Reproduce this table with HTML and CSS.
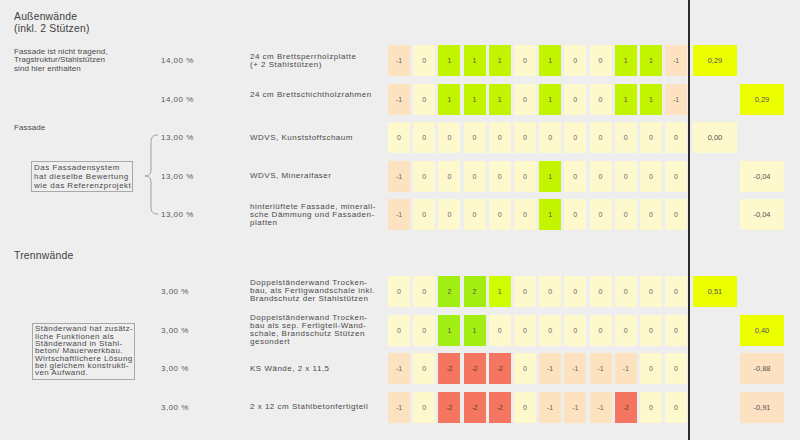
FILE: index.html
```html
<!DOCTYPE html>
<html lang="de">
<head>
<meta charset="utf-8">
<link rel="stylesheet" href="styles.css">
</head>
<body>
<div class="page">
  <div class="vline"></div>

  <section class="sec sec1">
    <h2 class="head">Außenwände<br>(inkl. 2 Stützen)</h2>
    <div class="grid">
      <!-- row 1 -->
      <div class="note r1">Fassade ist nicht tragend,<br>Tragstruktur/Stahlstützen<br>sind hier enthalten</div>
      <div class="pct r1">14,00 %</div>
      <div class="desc r1">24 cm Brettsperrholzplatte<br>(+ 2 Stahlstützen)</div>
      <div class="cells r1">
        <span class="c m1">-1</span><span class="c z">0</span><span class="c p1">1</span><span class="c p1">1</span><span class="c p1">1</span><span class="c z">0</span><span class="c p1">1</span><span class="c z">0</span><span class="c z">0</span><span class="c p1">1</span><span class="c p1">1</span><span class="c m1">-1</span>
      </div>
      <div class="res res1 r1 ry">0,29</div>

      <!-- row 2 -->
      <div class="pct r2">14,00 %</div>
      <div class="desc r2 up">24 cm Brettschichtholzrahmen</div>
      <div class="cells r2">
        <span class="c m1">-1</span><span class="c z">0</span><span class="c p1">1</span><span class="c p1">1</span><span class="c p1">1</span><span class="c z">0</span><span class="c p1">1</span><span class="c z">0</span><span class="c z">0</span><span class="c p1">1</span><span class="c p1">1</span><span class="c m1">-1</span>
      </div>
      <div class="res res2 r2 ry">0,29</div>

      <!-- group rows 3-5 -->
      <div class="group r3to5">
        <div class="glabel">Fassade</div>
        <div class="box box1">Das Fassadensystem<br>hat dieselbe Bewertung<br>wie das Referenzprojekt</div>
      </div>
      <svg class="brace r3to5" width="18" height="108" viewBox="0 0 18 108">
        <path d="M15 13 C10 13 8 15 8 21 L8 47 C8 52 6 54 2 54 C6 54 8 56 8 61 L8 85 C8 90 10 92 15 92" fill="none" stroke="#8a8a8a" stroke-width="0.8"/>
      </svg>

      <!-- row 3 -->
      <div class="pct r3">13,00 %</div>
      <div class="desc r3">WDVS, Kunststoffschaum</div>
      <div class="cells r3">
        <span class="c z">0</span><span class="c z">0</span><span class="c z">0</span><span class="c z">0</span><span class="c z">0</span><span class="c z">0</span><span class="c z">0</span><span class="c z">0</span><span class="c z">0</span><span class="c z">0</span><span class="c z">0</span><span class="c z">0</span>
      </div>
      <div class="res res1 r3 rz">0,00</div>

      <!-- row 4 -->
      <div class="pct r4">13,00 %</div>
      <div class="desc r4">WDVS, Mineralfaser</div>
      <div class="cells r4">
        <span class="c m1">-1</span><span class="c z">0</span><span class="c z">0</span><span class="c z">0</span><span class="c z">0</span><span class="c z">0</span><span class="c p1">1</span><span class="c z">0</span><span class="c z">0</span><span class="c z">0</span><span class="c z">0</span><span class="c z">0</span>
      </div>
      <div class="res res2 r4 rz">-0,04</div>

      <!-- row 5 -->
      <div class="pct r5">13,00 %</div>
      <div class="desc r5">hinterlüftete Fassade, minerali-<br>sche Dämmung und Fassaden-<br>platten</div>
      <div class="cells r5">
        <span class="c m1">-1</span><span class="c z">0</span><span class="c z">0</span><span class="c z">0</span><span class="c z">0</span><span class="c z">0</span><span class="c p1">1</span><span class="c z">0</span><span class="c z">0</span><span class="c z">0</span><span class="c z">0</span><span class="c z">0</span>
      </div>
      <div class="res res2 r5 rz">-0,04</div>
    </div>
  </section>

  <section class="sec sec2">
    <h2 class="head">Trennwände</h2>
    <div class="grid">
      <div class="group2 r1to4">
        <div class="box box2">Ständerwand hat zusätz-<br>liche Funktionen als<br>Ständerwand in Stahl-<br>beton/ Mauerwerkbau.<br>Wirtschaftlichere Lösung<br>bei gleichem konstrukti-<br>ven Aufwand.</div>
      </div>

      <!-- row 1 -->
      <div class="pct r1">3,00 %</div>
      <div class="desc r1">Doppelständerwand Trocken-<br>bau, als Fertigwandschale inkl.<br>Brandschutz der Stahlstützen</div>
      <div class="cells r1">
        <span class="c z">0</span><span class="c z">0</span><span class="c p2">2</span><span class="c p2">2</span><span class="c p1y">1</span><span class="c z">0</span><span class="c z">0</span><span class="c z">0</span><span class="c z">0</span><span class="c z">0</span><span class="c z">0</span><span class="c z">0</span>
      </div>
      <div class="res res1 r1 ry">0,51</div>

      <!-- row 2 -->
      <div class="pct r2">3,00 %</div>
      <div class="desc r2">Doppelständerwand Trocken-<br>bau als sep. Fertigteil-Wand-<br>schale, Brandschutz Stützen<br>gesondert</div>
      <div class="cells r2">
        <span class="c z">0</span><span class="c z">0</span><span class="c p2">1</span><span class="c p2">1</span><span class="c z">0</span><span class="c z">0</span><span class="c z">0</span><span class="c z">0</span><span class="c z">0</span><span class="c z">0</span><span class="c z">0</span><span class="c z">0</span>
      </div>
      <div class="res res2 r2 ry">0,40</div>

      <!-- row 3 -->
      <div class="pct r3">3,00 %</div>
      <div class="desc r3">KS Wände, 2 x 11,5</div>
      <div class="cells r3">
        <span class="c m1">-1</span><span class="c z">0</span><span class="c m2">-2</span><span class="c m2">-2</span><span class="c m2">-2</span><span class="c z">0</span><span class="c m1">-1</span><span class="c m1">-1</span><span class="c m1">-1</span><span class="c m1">-1</span><span class="c z">0</span><span class="c z">0</span>
      </div>
      <div class="res res2 r3 rm">-0,88</div>

      <!-- row 4 -->
      <div class="pct r4">3,00 %</div>
      <div class="desc r4">2 x 12 cm Stahlbetonfertigteil</div>
      <div class="cells r4">
        <span class="c m1">-1</span><span class="c z">0</span><span class="c m2">-2</span><span class="c m2">-2</span><span class="c m2">-2</span><span class="c z">0</span><span class="c m1">-1</span><span class="c m1">-1</span><span class="c m1">-1</span><span class="c m2">-2</span><span class="c z">0</span><span class="c z">0</span>
      </div>
      <div class="res res2 r4 rm">-0,91</div>
    </div>
  </section>
</div>
</body>
</html>
```
FILE: styles.css
```css
* { box-sizing: border-box; }
html, body { margin: 0; padding: 0; }
body {
  width: 800px;
  height: 440px;
  overflow: hidden;
  background: #eeeeee;
  font-family: "Liberation Sans", Arial, sans-serif;
  color: #4a4a4a;
}
.page {
  position: relative;
  height: 440px;
  padding: 11px 0 0 14px;
}
.vline {
  position: absolute;
  left: 688px;
  top: 0;
  width: 2px;
  height: 440px;
  background: #2c2c2c;
}
.head {
  margin: 0;
  font-weight: normal;
  font-size: 10.4px;
  line-height: 12px;
  color: #3f3f3f;
  letter-spacing: 0.2px;
}
.sec1 .head { margin-bottom: 10px; }
.sec2 { margin-top: 20px; }
.sec2 .head { margin-bottom: 13.6px; }

.grid {
  display: grid;
  grid-template-columns: 129px 18px 89px 138px 299.2px 5.8px 44px 3px 44px;
  grid-template-rows: repeat(5, 31px);
  row-gap: 7.6px;
}
.sec2 .grid { grid-template-rows: repeat(4, 31px); }

.r1 { grid-row: 1; }
.r2 { grid-row: 2; }
.r3 { grid-row: 3; }
.r4 { grid-row: 4; }
.r5 { grid-row: 5; }
.r3to5 { grid-row: 3 / 6; }
.r1to4 { grid-row: 1 / 5; }

.note {
  grid-column: 1 / 3;
  font-size: 8px;
  line-height: 8.4px;
  align-self: center;
  letter-spacing: 0.08px;
}
.pct {
  grid-column: 3;
  align-self: center;
  font-size: 8px;
  color: #595959;
  letter-spacing: 0.5px;
}
.desc {
  grid-column: 4;
  align-self: center;
  font-size: 8px;
  line-height: 8px;
  letter-spacing: 0.5px;
}
.desc.up { margin-top: -9px; }

.cells {
  grid-column: 5;
  display: grid;
  grid-template-columns: repeat(12, 22px);
  column-gap: 3.2px;
}
.c {
  display: flex;
  align-items: center;
  justify-content: center;
  height: 31px;
  font-size: 7px;
  color: #666;
}
.z { background: #fef8cd; }
.m1 { background: #fce2bf; }
.p1 { background: #c3f500; color: #555; }
.p1y { background: #cdfd00; color: #555; }
.p2 { background: #a3ee12; color: #555; }
.m2 { background: #f47660; color: #6a3a30; letter-spacing: -0.6px; }

.res {
  display: flex;
  align-items: center;
  justify-content: center;
  height: 31px;
  font-size: 7.5px;
  color: #555;
}
.res1 { grid-column: 7; }
.res2 { grid-column: 9; }
.ry { background: #ebff00; }
.rz { background: #fef8cd; }
.rm { background: #fce2c2; }

.group {
  grid-column: 1;
  display: grid;
  grid-template-rows: 1fr auto 1fr;
}
.glabel {
  font-size: 8px;
  line-height: 8px;
  padding-top: 2px;
  letter-spacing: 0.1px;
}
.box {
  border: 1px solid #a8a8a8;
  font-size: 8px;
}
.box1 {
  grid-row: 2;
  margin-left: 17px;
  width: 102px;
  padding: 1px 2px 1px 2px;
  line-height: 9px;
  letter-spacing: 0.5px;
  white-space: nowrap;
}
.brace {
  grid-column: 2;
  display: block;
}
.group2 {
  grid-column: 1 / 3;
  display: flex;
  align-items: center;
}
.box2 {
  margin-left: 18px;
  margin-top: 5px;
  width: 103px;
  padding: 1px 1px 3px 2px;
  line-height: 7.3px;
  letter-spacing: 0.42px;
  white-space: nowrap;
}
```
